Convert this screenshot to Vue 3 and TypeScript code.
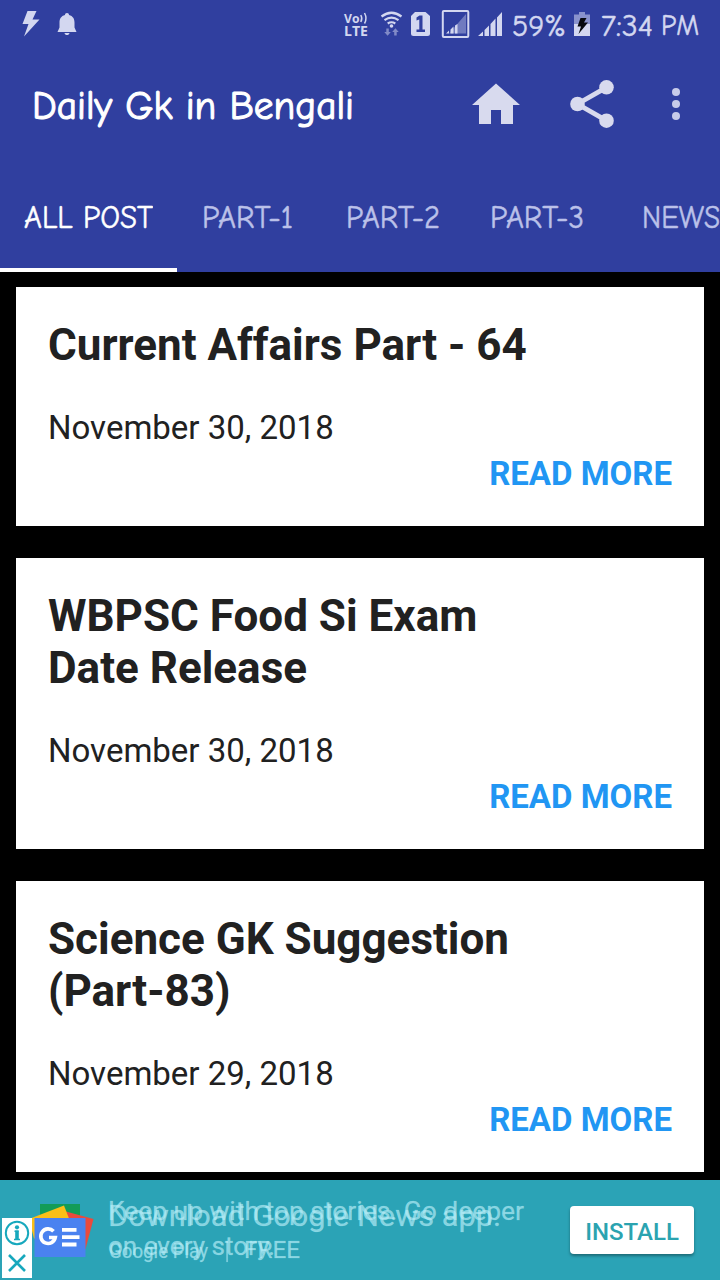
<script setup lang="ts">
interface Post {
  title: string
  date: string
}
interface Tab {
  label: string
  width: number
  inset: number
  textWidth: number
}

const tabs: Tab[] = [
  { label: 'ALL POST', width: 177, inset: 24, textWidth: 129 },
  { label: 'PART-1', width: 144, inset: 25, textWidth: 91 },
  { label: 'PART-2', width: 144, inset: 25, textWidth: 94 },
  { label: 'PART-3', width: 144, inset: 25, textWidth: 94 },
  { label: 'NEWS', width: 144, inset: 33, textWidth: 78 },
]

const posts: Post[] = [
  { title: 'Current Affairs Part - 64', date: 'November 30, 2018' },
  { title: 'WBPSC Food Si Exam\nDate Release', date: 'November 30, 2018' },
  { title: 'Science GK Suggestion\n(Part-83)', date: 'November 29, 2018' },
]
</script>

<template>
  <div class="screen">
    <header class="header">
      <div class="status">
        <svg class="status-left" width="100" height="48" viewBox="0 0 100 48">
          <path d="M27.500 11h9l-4 8.500h7L24 36.500l4.500-12.500h-6z" />
          <path d="M67 13c1.300 0 2 .8 2 1.900 4 1 5.500 4 5.500 7.500v5l2 4.600h-19l2-4.600v-5c0-3.500 1.500-6.500 5.500-7.500 0-1.100.7-1.900 2-1.900zM64.500 33h5c-.3 1.500-1.200 2-2.500 2s-2.200-.5-2.500-2z" />
        </svg>
        <svg class="status-right" width="380" height="48" viewBox="340 0 380 48">
          <g class="small-bold">
            <text x="344" y="23" font-size="13" textLength="15.500" lengthAdjust="spacingAndGlyphs">Vo</text>
            <text x="344" y="36" font-size="14.500" textLength="24" lengthAdjust="spacingAndGlyphs">LTE</text>
          </g>
          <g class="line" stroke-width="1.500">
            <path d="M360.800 15q2 3.500 0 7M364.500 13q3 5.500 0 10.500" />
          </g>
          <g class="line" stroke-width="2.200">
            <path d="M381.500 16.500q10-7.500 20 0M384.500 20.200q7-5 14 0M387.700 23.500q3.800-2.500 7.600 0" />
          </g>
          <circle cx="391.500" cy="26" r="1.800" />
          <path opacity=".5" d="M386.300 28.500h2.500v3.500h2l-3.200 3.700-3.300-3.700h2zM394.200 35.500v-3.500h-2l3.200-3.700 3.300 3.700h-2v3.500z" />
          <path d="M415 12h10.500l4.500 4v17.500q0 2.500-2.500 2.500h-14q-2.500 0-2.500-2.500V16z" />
          <path fill="#303f9f" d="M419.500 15.500h3V29.500h2.500V32h-8.500v-2.500h2.800V19.500l-2.800 1v-3z" />
          <rect class="line" x="442.800" y="11" width="25.500" height="26" rx="1" stroke-width="2" />
          <path opacity=".4" d="M466 14v19.500h-17z" />
          <path d="M446 33.500l3-3v3zM450.500 29.500l3-3v7h-3zM457.500 24v9.500H455v-8z" />
          <path d="M478 36l5-4.500V36zM484.500 30l4.500-4.500V36h-4.500zM490.500 24l5-5.500V36h-5zM497 17.500l5-5.500v24h-5z" />
          <text class="casual" x="512" y="35.500" font-size="30.500" textLength="54" lengthAdjust="spacingAndGlyphs">59%</text>
          <path opacity=".55" d="M579 12h6v2.500h5V24h-16v-9.500h5z" />
          <path d="M574 24h16v12h-16z" />
          <path fill="#08090f" d="M580.500 18h6l-2.500 4.500h4L578.500 34l2.500-7.500h-3.500z" />
          <text class="casual" x="601" y="35.500" font-size="30.500" textLength="52" lengthAdjust="spacingAndGlyphs">7:34</text>
          <text class="casual" x="661" y="35" font-size="30" textLength="38" lengthAdjust="spacingAndGlyphs">PM</text>
        </svg>
      </div>

      <div class="toolbar">
        <svg class="app-title" width="322" height="60" viewBox="0 0 322 60">
          <text class="casual" x="0" y="45" font-size="40.500" textLength="322" lengthAdjust="spacingAndGlyphs">Daily Gk in Bengali</text>
        </svg>
        <svg class="actions" width="270" height="70" viewBox="450 69 270 70">
          <path d="M496 83.500l24 21.500h-7v19h-12V110h-10v14h-12V105h-7z" />
          <path class="share-line" d="M606.500 87.300L577.500 104l29 16.700" />
          <circle cx="606.500" cy="87.300" r="7.300" />
          <circle cx="577.500" cy="104" r="7.300" />
          <circle cx="606.500" cy="120.700" r="7.300" />
          <g fill="#c7cbea">
            <circle cx="676" cy="92" r="4" />
            <circle cx="676" cy="104" r="4" />
            <circle cx="676" cy="116" r="4" />
          </g>
        </svg>
      </div>

      <nav class="tabs">
        <div
          v-for="(tab, i) in tabs"
          :key="tab.label"
          class="tab"
          :class="{ active: i === 0 }"
          :style="{ width: tab.width + 'px', paddingLeft: tab.inset + 'px' }"
        >
          <svg :width="tab.textWidth" height="40">
            <text class="casual" x="0" y="27.500" font-size="31.500" :textLength="tab.textWidth" lengthAdjust="spacingAndGlyphs">{{ tab.label }}</text>
          </svg>
        </div>
      </nav>
    </header>

    <main class="feed">
      <article v-for="post in posts" :key="post.title" class="card">
        <h2>{{ post.title }}</h2>
        <p class="date">{{ post.date }}</p>
        <a class="more">READ MORE</a>
      </article>
    </main>

    <footer class="ad">
      <svg class="ad-art" width="560" height="100" viewBox="0 1180 560 100">
        <path fill="#129c57" d="M40 1204h40v20H40z" />
        <path fill="#ea4a3d" d="M66 1211.500l27.500 7.500-8 30H66z" />
        <path fill="#fbbf17" d="M29 1219l35-13.500 5 13v20H34z" />
        <path fill="#4a82f0" d="M34.500 1218h51v39h-51z" />
        <path class="logo-g" d="M53.500 1231.200a7.300 7.300 0 1 0 1.800 6.300H49" />
        <path fill="#fff" d="M62 1228h14.500v3.800H62zM62 1235.300h17.500v3.800H62zM62 1242.600h14.500v3.800H62z" />
        <g class="ad-text">
          <text x="108" y="1220" font-size="25" textLength="416" lengthAdjust="spacingAndGlyphs">Keep up with top stories. Go deeper</text>
          <text x="108" y="1255" font-size="25" textLength="167" lengthAdjust="spacingAndGlyphs">on every story.</text>
          <text x="108" y="1226" font-size="29.500" textLength="393" lengthAdjust="spacingAndGlyphs">Download Google News app.</text>
          <text x="109" y="1258" font-size="19.500" textLength="99" lengthAdjust="spacingAndGlyphs">Google Play</text>
          <path d="M226.500 1241h1.200v21h-1.200z" />
          <text x="244" y="1258" font-size="23.500" textLength="56" lengthAdjust="spacingAndGlyphs">FREE</text>
        </g>
        <path fill="#fff" d="M2 1218h30v60H2z" />
        <g class="ad-choice">
          <circle cx="17" cy="1233" r="11.200" stroke-width="2" />
          <path stroke-width="3.600" d="M17 1230.500v9.500" />
          <path stroke-width="1.600" d="M14.500 1231.300h4M14 1239.500h6" />
          <path stroke-width="2.600" d="M9 1255l16 16M25 1255l-16 16" />
        </g>
        <circle cx="17" cy="1227.300" r="2.100" fill="#17a8bd" />
      </svg>
      <button class="install">INSTALL</button>
    </footer>
  </div>
</template>

<style>
html,
body {
  margin: 0;
  background: #000;
}
</style>

<style scoped>
.screen {
  width: 720px;
  height: 1280px;
  overflow: hidden;
  display: flex;
  flex-direction: column;
  background: #000;
  font-family: Roboto, sans-serif;
}
svg {
  display: block;
  flex: none;
}
.casual {
  font-family: "Comic Neue", "Comic Sans MS", Lato, sans-serif;
  stroke: currentColor;
  stroke-width: 0.5;
}
.header {
  height: 272px;
  flex: none;
  background: #303f9f;
  overflow: hidden;
}
.status {
  height: 48px;
  display: flex;
  justify-content: space-between;
  fill: #d3d7f0;
  color: #d3d7f0;
}
.small-bold {
  font-family: "Open Sans", sans-serif;
  font-weight: 700;
}
.line {
  fill: none;
  stroke: #d3d7f0;
}
.toolbar {
  height: 112px;
  display: flex;
  align-items: center;
  justify-content: space-between;
  padding-left: 32px;
}
.app-title {
  fill: #fff;
  color: #fff;
  overflow: visible;
}
.app-title .casual {
  stroke-width: 1.1;
}
.actions {
  fill: #d8daee;
}
.share-line {
  fill: none;
  stroke: #d8daee;
  stroke-width: 4.8;
}
.tabs {
  height: 112px;
  display: flex;
}
.tab {
  box-sizing: border-box;
  flex: none;
  padding-top: 40px;
  fill: #bbc1e9;
  color: #bbc1e9;
}
.tab.active {
  fill: #fff;
  color: #fff;
  border-bottom: 4px solid #fff;
}
.feed {
  flex: none;
  height: 908px;
  box-sizing: border-box;
  padding: 15px 16px 8px;
  display: flex;
  flex-direction: column;
  gap: 32px;
}
.card {
  background: #fff;
  color: #212121;
  padding: 32px 32px 29px;
  display: flex;
  flex-direction: column;
}
h2 {
  margin: 0 0 34px;
  font-size: 44px;
  line-height: 52px;
  font-weight: 700;
  white-space: pre-line;
}
.date {
  margin: 0;
  font-size: 33px;
  line-height: 46px;
}
.more {
  align-self: flex-end;
  font-size: 33px;
  line-height: 46px;
  font-weight: 700;
  color: #2196f3;
}
.ad {
  height: 100px;
  flex: none;
  display: flex;
  align-items: center;
  background: #2ba3b6;
}
.ad-text {
  fill: #b8eef8;
  fill-opacity: 0.68;
  stroke: #b8eef8;
  stroke-opacity: 0.3;
  stroke-width: 0.5;
}
.logo-g {
  fill: none;
  stroke: #fff;
  stroke-width: 3.6;
}
.ad-choice {
  fill: none;
  stroke: #17a8bd;
}
.install {
  margin-left: 10px;
  width: 124px;
  height: 48px;
  padding: 3px 0 0;
  border: 0;
  border-radius: 4px;
  background: #fff;
  color: #2ba3b0;
  font: 500 24px Roboto, sans-serif;
  box-shadow: 0 2px 3px rgba(0, 0, 0, 0.35);
}
</style>
